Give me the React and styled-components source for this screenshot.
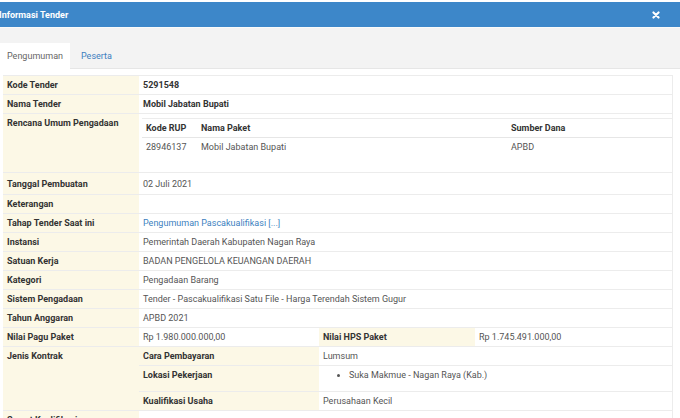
import React, { useState } from 'react';
import styled, { createGlobalStyle } from 'styled-components';

const GlobalStyle = createGlobalStyle`
	body {
		margin: 0;
		background: #fff;
		font-family: Roboto, "Liberation Sans", sans-serif;
		font-size: 9px;
		color: #555;
	}
`;

const rows = [
	{ label: 'Tanggal Pembuatan', value: '02 Juli 2021', tall: true },
	{ label: 'Keterangan', value: '' },
	{ label: 'Tahap Tender Saat ini', value: 'Pengumuman Pascakualifikasi [...]', link: true },
	{ label: 'Instansi', value: 'Pemerintah Daerah Kabupaten Nagan Raya' },
	{ label: 'Satuan Kerja', value: 'BADAN PENGELOLA KEUANGAN DAERAH' },
	{ label: 'Kategori', value: 'Pengadaan Barang' },
	{ label: 'Sistem Pengadaan', value: 'Tender - Pascakualifikasi Satu File - Harga Terendah Sistem Gugur' },
	{ label: 'Tahun Anggaran', value: 'APBD 2021' },
];

const CloseIcon = () => (
	<svg width="8" height="8" viewBox="0 0 10 10">
		<path d="M1.8 1.8 L8.2 8.2 M8.2 1.8 L1.8 8.2" stroke="#fff" strokeWidth="2.6" strokeLinecap="round" />
	</svg>
);

const App = () => {
	const [ tab, setTab ] = useState('pengumuman');

	return (
		<>
			<GlobalStyle />
			<Modal>
				<Header>
					<Title>Informasi Tender</Title>
					<CloseButton><CloseIcon /></CloseButton>
				</Header>

				<TabBar>
					<Tab active={ tab === 'pengumuman' } onClick={ () => setTab('pengumuman') }>Pengumuman</Tab>
					<Tab active={ tab === 'peserta' } onClick={ () => setTab('peserta') }>Peserta</Tab>
				</TabBar>

				<Body>
					<InfoTable>
						<colgroup>
							<col style={ { width: '136px' } } />
							<col style={ { width: '180px' } } />
							<col style={ { width: '156px' } } />
							<col />
						</colgroup>
						<tbody>
							<tr>
								<Label>Kode Tender</Label>
								<Value colSpan={ 3 } strong>5291548</Value>
							</tr>
							<tr>
								<Label>Nama Tender</Label>
								<Value colSpan={ 3 } strong>Mobil Jabatan Bupati</Value>
							</tr>
							<tr>
								<Label>Rencana Umum Pengadaan</Label>
								<NestCell colSpan={ 3 }>
									<RupTable>
										<colgroup>
											<col style={ { width: '55px' } } />
											<col style={ { width: '310px' } } />
											<col />
										</colgroup>
										<thead>
											<tr>
												<RupHead>Kode RUP</RupHead>
												<RupHead>Nama Paket</RupHead>
												<RupHead>Sumber Dana</RupHead>
											</tr>
										</thead>
										<tbody>
											<tr>
												<RupCell>28946137</RupCell>
												<RupCell>Mobil Jabatan Bupati</RupCell>
												<RupCell>APBD</RupCell>
											</tr>
										</tbody>
									</RupTable>
								</NestCell>
							</tr>
							{ rows.map(r => (
								<tr key={ r.label }>
									<Label tall={ r.tall }>{ r.label }</Label>
									<Value colSpan={ 3 } tall={ r.tall }>
										{ r.link ? <Link href="#">{ r.value }</Link> : r.value }
									</Value>
								</tr>
							)) }
							<tr>
								<Label>Nilai Pagu Paket</Label>
								<Value>Rp 1.980.000.000,00</Value>
								<Label>Nilai HPS Paket</Label>
								<Value>Rp 1.745.491.000,00</Value>
							</tr>
							<tr>
								<Label rowSpan={ 3 }>Jenis Kontrak</Label>
								<Label>Cara Pembayaran</Label>
								<Value colSpan={ 2 }>Lumsum</Value>
							</tr>
							<tr>
								<Label>Lokasi Pekerjaan</Label>
								<Value colSpan={ 2 }>
									<Locations>
										<li>Suka Makmue - Nagan Raya (Kab.)</li>
									</Locations>
								</Value>
							</tr>
							<tr>
								<Label>Kualifikasi Usaha</Label>
								<Value colSpan={ 2 }>Perusahaan Kecil</Value>
							</tr>
							<tr>
								<Label>Syarat Kualifikasi</Label>
								<Value colSpan={ 3 }></Value>
							</tr>
						</tbody>
					</InfoTable>
				</Body>
			</Modal>
		</>
	);
};

const Modal = styled.div`
	padding-top: 2px;
	height: 416px;
	overflow: hidden;
	background: #fff;
`;

const Header = styled.div`
	display: flex;
	align-items: center;
	justify-content: space-between;
	height: 25px;
	background: #3d87c9;
	padding: 0 20px 0 0;
`;

const Title = styled.h4`
	margin: 0 0 0 -1px;
	color: #fff;
	font-size: 9px;
	font-weight: 700;
`;

const CloseButton = styled.span`
	display: flex;
	cursor: pointer;
`;

const TabBar = styled.div`
	display: flex;
	align-items: flex-end;
	height: 42px;
	background: #f3f3f3;
	border-top: 1px solid #fafafa;
	border-bottom: 1px solid #e6e6e6;
	box-sizing: border-box;
`;

const Tab = styled.div`
	height: 26px;
	padding: 0 7px;
	margin-right: 4px;
	display: flex;
	align-items: center;
	cursor: pointer;
	font-size: 9px;
	background: ${ ({ active }) => active ? '#fff' : 'transparent' };
	color: ${ ({ active }) => active ? '#666' : '#3d7fc0' };
	margin-bottom: -1px;
`;

const Body = styled.div`
	padding: 6px 7px 0 3px;
`;

const InfoTable = styled.table`
	width: 100%;
	border-collapse: collapse;
	table-layout: fixed;
	border-right: 1px solid #ececec;
`;

const cell = `
	padding: 3px 4px;
	line-height: 12px;
	border-top: 1px solid #ececec;
	vertical-align: top;
	text-align: left;
	white-space: nowrap;
	overflow: hidden;
`;

const Label = styled.td`
	${ cell }
	background: #fcf8e6;
	color: #333;
	font-weight: 700;
	padding-top: ${ ({ tall }) => tall ? '5px' : '3px' };
	padding-bottom: ${ ({ tall }) => tall ? '4px' : '3px' };
`;

const Value = styled.td`
	${ cell }
	background: #fff;
	color: ${ ({ strong }) => strong ? '#333' : '#555' };
	font-weight: ${ ({ strong }) => strong ? 700 : 400 };
	padding-top: ${ ({ tall }) => tall ? '5px' : '3px' };
	padding-bottom: ${ ({ tall }) => tall ? '4px' : '3px' };
`;

const NestCell = styled.td`
	${ cell }
	padding: 4px 0 16px 3px;
	background: #fff;
`;

const RupTable = styled.table`
	width: 100%;
	border-collapse: collapse;
	table-layout: fixed;
`;

const RupHead = styled.th`
	padding: 3px 4px;
	line-height: 12px;
	text-align: left;
	color: #333;
	font-weight: 700;
	border-top: 1px solid #ececec;
	border-bottom: 1px solid #e6e6e6;
`;

const RupCell = styled.td`
	padding: 3px 4px;
	line-height: 12px;
	color: #555;
`;

const Link = styled.a`
	color: #3d7fc0;
	text-decoration: none;
`;

const Locations = styled.ul`
	margin: 0 0 7px;
	padding-left: 26px;
	list-style: disc;
`;

export default App;
